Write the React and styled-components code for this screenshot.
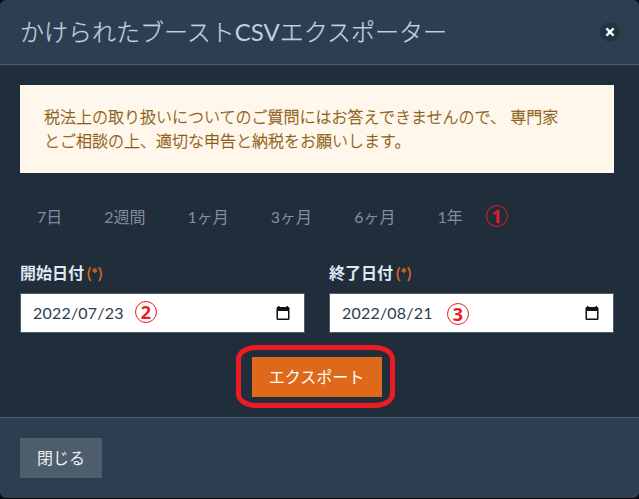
import React from "react";
import styled, { createGlobalStyle } from "styled-components";

const GlobalStyle = createGlobalStyle`
  *, *::before, *::after { box-sizing: border-box; }
  body {
    margin: 0;
    background: #08090c;
    font-family: Lato, "Noto Sans CJK JP", sans-serif;
    font-size: 16px;
    line-height: 24px;
  }
  button { font: inherit; border: 0; margin: 0; }
`;

const Dialog = styled.section`
  display: flex;
  flex-direction: column;
  width: 639px;
  height: 498px;
  overflow: hidden;
  border-radius: 6px;
  background: #202d3a;
`;

const Header = styled.header`
  display: flex;
  align-items: center;
  justify-content: space-between;
  height: 65px;
  padding: 0 19px 0 20px;
  background: #2c3e50;
  border-bottom: 1px solid #4e5d6c;
`;

const Title = styled.h1`
  margin: 0;
  font-size: 24px;
  line-height: 32px;
  font-weight: 300;
  color: #bdd0e3;
  -webkit-text-stroke: 0.25px #bdd0e3;
`;

const Latin = styled.span`
  font-weight: 400;
  -webkit-text-stroke: 0;
`;

const CloseIcon = styled.button`
  display: flex;
  align-items: center;
  justify-content: center;
  width: 20px;
  height: 20px;
  padding: 0;
  border-radius: 50%;
  background: #243342;
`;

const Body = styled.main`
  flex: 1;
  padding: 20px 25px 0 20px;
`;

const Notice = styled.p`
  margin: 0;
  height: 88px;
  padding: 20px 24px;
  background: #fff6ec;
  color: #8a5a0c;
  font-weight: 300;
  -webkit-text-stroke: 0.3px #8a5a0c;
  white-space: nowrap;
`;

const Ranges = styled.nav`
  display: flex;
  align-items: center;
  gap: 8px;
  height: 40px;
  margin-top: 24px;
`;

const RangeButton = styled.button`
  padding: 8px 17px;
  background: transparent;
  color: #7f8ea3;
  white-space: nowrap;
`;

const Fields = styled.div`
  display: grid;
  grid-template-columns: 285px 285px;
  column-gap: 24px;
  margin-top: 24px;
`;

const Label = styled.div`
  height: 32px;
  font-weight: 700;
  color: #dfe8f0;
`;

const Required = styled.span`
  margin-left: 3px;
  font-weight: 400;
  color: #df691a;
  -webkit-text-stroke: 0.3px #df691a;
`;

const DateBox = styled.div`
  position: relative;
  display: flex;
  align-items: center;
  justify-content: space-between;
  height: 40px;
  padding: 0 14px 0 12px;
  border: 1px solid #4e5d6c;
  background: #fff;
  color: #2b3e50;
  letter-spacing: 0.2px;
`;

const Marker = styled.span`
  position: ${(p) => (p.$left === undefined ? "static" : "absolute")};
  left: ${(p) => p.$left}px;
  top: ${(p) => p.$top}px;
  display: flex;
  align-items: center;
  justify-content: center;
  width: 22px;
  height: 22px;
  border: 1px solid #ed1c24;
  border-radius: 50%;
  color: #ed1c24;
  font: 700 18px/20px "Noto Sans", sans-serif;
  letter-spacing: 0;
`;

const RangeMarker = styled(Marker)`
  margin: -2px 0 0 -2px;
`;

const Actions = styled.div`
  display: flex;
  justify-content: center;
  margin-top: 12px;
  padding-right: 3px;
`;

const Highlight = styled.div`
  display: flex;
  justify-content: center;
  align-items: center;
  width: 159px;
  height: 63px;
  padding-left: 2px;
  border: 5px solid #ed1c24;
  border-radius: 20px / 14px;
`;

const Button = styled.button`
  height: 40px;
  padding: 0;
  width: ${(p) => p.$width}px;
  background: ${(p) => (p.$primary ? "#df691a" : "#4e5d6c")};
  color: ${(p) => (p.$primary ? "#fff" : "#ebf1f6")};
`;

const Footer = styled.footer`
  display: flex;
  align-items: center;
  height: 81px;
  padding: 0 20px;
  border-top: 1px solid #4e5d6c;
  background: #2c3e50;
`;

function CalendarIcon() {
  return (
    <svg width="14" height="15" viewBox="0 0 14 15" fill="#111" aria-hidden="true">
      <path
        fillRule="evenodd"
        d="M2 0h1.500v1h7V0h1.500v1h.5A1.200 1.200 0 0 1 13.500 2.200v10.600a1.200 1.200 0 0 1-1.200 1.200H1.700A1.200 1.200 0 0 1 .5 12.800V2.200A1.200 1.200 0 0 1 1.700 1H2zM2 5v7.500h10V5z"
      />
    </svg>
  );
}

function DateField({ label, value, marker, left, top }) {
  return (
    <div>
      <Label>
        {label}
        <Required>(*)</Required>
      </Label>
      <DateBox>
        {value}
        <CalendarIcon />
        <Marker $left={left} $top={top}>{marker}</Marker>
      </DateBox>
    </div>
  );
}

const ranges = ["7日", "2週間", "1ヶ月", "3ヶ月", "6ヶ月", "1年"];

export default function App() {
  return (
    <>
      <GlobalStyle />
      <Dialog>
        <Header>
          <Title>かけられたブースト<Latin>CSV</Latin>エクスポーター</Title>
          <CloseIcon aria-label="閉じる">
            <svg width="10" height="10" viewBox="0 0 10 10" stroke="#fff" strokeWidth="2.3">
              <path d="M1.400 1.400L8.600 8.600M8.600 1.400L1.400 8.600" />
            </svg>
          </CloseIcon>
        </Header>
        <Body>
          <Notice>
            税法上の取り扱いについてのご質問にはお答えできませんので、 専門家
            <br />
            とご相談の上、適切な申告と納税をお願いします。
          </Notice>
          <Ranges>
            {ranges.map((r) => (
              <RangeButton key={r}>{r}</RangeButton>
            ))}
            <RangeMarker>1</RangeMarker>
          </Ranges>
          <Fields>
            <DateField label="開始日付" value="2022/07/23" marker="2" left={114} top={7} />
            <DateField label="終了日付" value="2022/08/21" marker="3" left={117} top={9} />
          </Fields>
          <Actions>
            <Highlight>
              <Button $primary $width={130}>エクスポート</Button>
            </Highlight>
          </Actions>
        </Body>
        <Footer>
          <Button $width={82}>閉じる</Button>
        </Footer>
      </Dialog>
    </>
  );
}
